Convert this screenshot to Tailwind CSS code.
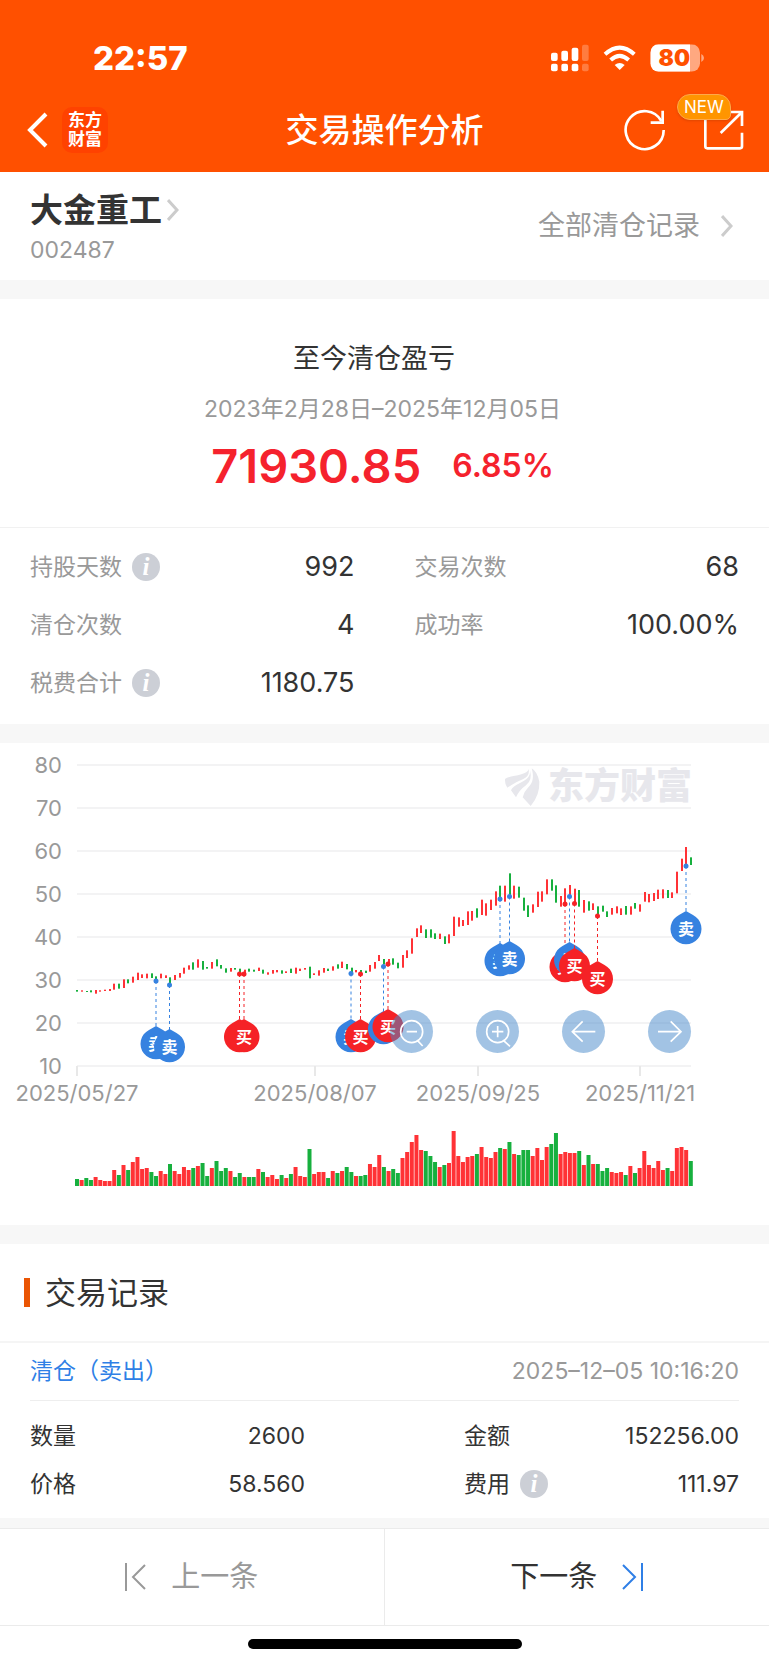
<!DOCTYPE html>
<html lang="zh-CN">
<head>
<meta charset="utf-8">
<meta name="viewport" content="width=device-width, initial-scale=1">
<title>交易操作分析</title>
<script src="https://cdn.jsdelivr.net/npm/@tailwindcss/browser@4"></script>
</head>
<body class="flex min-h-screen flex-col bg-white font-['Inter','Noto_Sans_CJK_SC',sans-serif] text-[#333]">

<header class="bg-[#ff5000] text-white">
  <div class="flex h-[88px] items-end justify-between pr-[65px] pl-[93px]">
    <time class="text-[33px] leading-[60px] font-extrabold">22:57</time>
    <div class="flex h-[60px] items-center gap-[14px]">
      <svg class="h-[28px] w-[38px]" viewBox="153 40 114 84" fill="#fff" aria-label="信号">
        <rect x="153" y="66" width="20" height="25" rx="6"/><rect x="184" y="60" width="20" height="31" rx="6"/><rect x="215" y="51" width="20" height="40" rx="6"/>
        <rect x="246" y="42" width="20" height="49" rx="6" opacity=".25"/>
        <rect x="153" y="99" width="20" height="23" rx="6"/><rect x="184" y="99" width="20" height="23" rx="6"/><rect x="215" y="99" width="20" height="23" rx="6"/>
        <rect x="246" y="99" width="20" height="23" rx="6" opacity=".25"/>
      </svg>
      <svg class="h-[28px] w-[33px]" viewBox="309 40 99 84" fill="none" stroke="#fff" stroke-width="12" aria-label="无线网络">
        <path d="M315 71Q359 31 403 71"/><path d="M332 88Q359 63 386 88"/>
        <path d="M359 118L344 103Q359 91 374 103Z" fill="#fff" stroke="none"/>
      </svg>
      <svg class="h-[28px] w-[54px]" viewBox="450 40 162 84" aria-label="电量">
        <defs><clipPath id="bat"><rect x="451" y="41" width="149" height="82" rx="25"/></clipPath></defs>
        <g clip-path="url(#bat)"><rect x="451" y="41" width="149" height="82" fill="#ffa880"/><rect x="451" y="41" width="119" height="82" fill="#fff"/></g>
        <path d="M604 70q8 4 8 12t-8 12z" fill="#ffa880"/>
        <text x="523" y="106" text-anchor="middle" font-size="68" font-weight="900" fill="#ff5000">80</text>
      </svg>
    </div>
  </div>
  <div class="relative flex h-[84px] items-center pr-[24px] pl-[27px]">
    <button class="mr-[14px] h-[36px] w-[21px]" aria-label="返回">
      <svg class="h-full w-full" viewBox="0 0 21 36" fill="none" stroke="#fff" stroke-width="4"><path d="M19 2L3 18l16 16"/></svg>
    </button>
    <a href="#" class="flex h-[46px] w-[46px] flex-col items-center justify-center rounded-[10px] bg-[#ff4200] text-[17px] leading-[19px] font-bold"><span>东方</span><span>财富</span></a>
    <h1 class="pointer-events-none absolute inset-x-0 text-center text-[33px] leading-[48px] font-medium">交易操作分析</h1>
    <button class="ml-auto h-[42px] w-[42px]" aria-label="刷新">
      <svg class="h-full w-full" viewBox="372 234 126 126" fill="none" stroke="#fff" stroke-width="8"><path d="M491 297A57 57 0 1 1 484 270"/><path d="M488 239v36h-36"/></svg>
    </button>
    <button class="relative ml-[37px] h-[42px] w-[42px]" aria-label="分享">
      <svg class="h-full w-full" viewBox="609 234 126 126" fill="none" stroke="#fff" stroke-width="8"><path d="M640 243H616v103q0 6 6 6h98q6 0 6-6V305"/><path d="M690 243h36v42M723 246L662 306"/></svg>
      <span class="absolute -top-[15px] -left-[26px] h-[26px] rounded-[13px] rounded-br-[5px] border border-[#ffa94a] bg-[#ff9500] px-[6px] text-[17px] leading-[24px] shadow-sm">NEW</span>
    </button>
  </div>
</header>

<main>
  <section class="flex h-[108px] items-start justify-between px-[30px]">
    <div class="pt-[18px]">
      <a href="#" class="flex items-center gap-[5px] text-[33px] leading-[40px] font-bold">大金重工
        <svg class="h-[22px] w-[12px]" viewBox="0 0 12 22" fill="none" stroke="#ccc" stroke-width="3"><path d="M1 1l9 10-9 10"/></svg>
      </a>
      <p class="text-[23px] leading-[40px] text-[#999]">002487</p>
    </div>
    <a href="#" class="flex items-center gap-[21px] pt-[34px] pr-[6px] text-[27px] leading-[40px] text-[#999]">全部清仓记录
      <svg class="h-[22px] w-[12px]" viewBox="0 0 12 22" fill="none" stroke="#ccc" stroke-width="3"><path d="M1 1l9 10-9 10"/></svg>
    </a>
  </section>
  <div class="h-[19px] bg-[#f7f7f7]"></div>

  <section class="flex h-[229px] flex-col items-center border-b border-[#f1f1f1] pt-[40px]">
    <h2 class="pr-[21px] text-[27px] leading-[40px]">至今清仓盈亏</h2>
    <p class="mt-[10px] pr-[4px] text-[23px] leading-[40px] text-[#999]">2023年2月28日–2025年12月05日</p>
    <p class="mt-[7px] flex items-center gap-[31px] pr-[4px] leading-[60px] font-semibold text-[#f5222d]"><span class="text-[47px]">71930.85</span><span class="text-[32px]">6.85%</span></p>
  </section>

  <dl class="grid grid-cols-2 gap-x-[60px] px-[30px] pt-[10px] pb-[12px] text-[27px] leading-[58px]">
    <div class="flex items-center"><dt class="text-[23px] text-[#999]">持股天数</dt><button class="ml-[10px] h-[28px] w-[28px] rounded-full bg-[#cccfd6] font-['Liberation_Serif',serif] text-[25px] leading-[28px] font-bold text-white italic" aria-label="持股天数说明">i</button><dd class="ml-auto">992</dd></div>
    <div class="flex items-center"><dt class="text-[23px] text-[#999]">交易次数</dt><dd class="ml-auto">68</dd></div>
    <div class="flex items-center"><dt class="text-[23px] text-[#999]">清仓次数</dt><dd class="ml-auto">4</dd></div>
    <div class="flex items-center"><dt class="text-[23px] text-[#999]">成功率</dt><dd class="ml-auto">100.00%</dd></div>
    <div class="flex items-center"><dt class="text-[23px] text-[#999]">税费合计</dt><button class="ml-[10px] h-[28px] w-[28px] rounded-full bg-[#cccfd6] font-['Liberation_Serif',serif] text-[25px] leading-[28px] font-bold text-white italic" aria-label="税费合计说明">i</button><dd class="ml-auto">1180.75</dd></div>
  </dl>
  <div class="h-[19px] bg-[#f7f7f7]"></div>

  <section class="relative" aria-label="股价走势">
    <svg id="chart" class="block h-auto w-full" viewBox="0 743 769 482">
      <g id="grid" stroke="#f3f3f4" stroke-width="2"></g>
      <g fill="#e7e7ec">
        <g transform="translate(500 765) scale(.3333)">
          <path d="M86 12C84 22 70 28 45 32Q22 36 15 42Q14 58 22 68Q50 50 70 42Q90 32 86 12Z"/>
          <path d="M90 16C92 35 80 45 60 54Q38 64 33 76L48 97Q58 75 78 61Q98 46 90 16Z"/>
          <path d="M95 10C102 35 100 53 85 67Q72 80 68 97L92 123Q120 90 118 50Q112 20 95 10Z"/>
        </g>
        <text x="548" y="799" font-size="36" font-weight="900">东方财富</text>
      </g>
      <g id="labels" fill="#999" font-size="22"></g>
      <g id="candles"></g>
      <g id="volume"></g>
      <g id="pins"></g>
    </svg>
    <div class="absolute top-[55.4%] right-[10.1%] flex gap-[43px]">
      <button class="h-[43px] w-[43px] rounded-full bg-[#4687c9]/50" aria-label="缩小"><svg class="h-full w-full" viewBox="0 0 129 129" fill="none" stroke="#fff" stroke-width="5"><circle cx="65" cy="65" r="33"/><path d="M50 65h31M82 91l16 17"/></svg></button>
      <button class="h-[43px] w-[43px] rounded-full bg-[#4687c9]/50" aria-label="放大"><svg class="h-full w-full" viewBox="0 0 129 129" fill="none" stroke="#fff" stroke-width="5"><circle cx="65" cy="65" r="33"/><path d="M48 65h34M65 48v34M82 91l20 18"/></svg></button>
      <button class="h-[43px] w-[43px] rounded-full bg-[#4687c9]/50" aria-label="向左"><svg class="h-full w-full" viewBox="0 0 129 129" fill="none" stroke="#fff" stroke-width="5"><path d="M100 65H32M62 34L31 65l31 30"/></svg></button>
      <button class="h-[43px] w-[43px] rounded-full bg-[#4687c9]/50" aria-label="向右"><svg class="h-full w-full" viewBox="0 0 129 129" fill="none" stroke="#fff" stroke-width="5"><path d="M30 65h68M68 34l31 31-31 30"/></svg></button>
    </div>
  </section>
  <div class="h-[19px] bg-[#f7f7f7]"></div>

  <section>
    <div class="flex h-[99px] items-center gap-[15px] border-b-2 border-[#f5f5f5] pl-[24px]">
      <span class="h-[29px] w-[6px] bg-[#ea5504]"></span>
      <h2 class="text-[31px] leading-[44px]">交易记录</h2>
    </div>
    <div class="mx-[30px] flex h-[58px] items-center justify-between border-b border-[#eee]">
      <h3 class="text-[23px] text-[#2f7fe6]">清仓（卖出）</h3>
      <time class="text-[23px] text-[#999]">2025–12–05 10:16:20</time>
    </div>
    <dl class="grid grid-cols-[275fr_275fr] gap-x-[159px] px-[30px] pt-[11px] pb-[10px] text-[23px] leading-[48px]">
      <div class="flex items-center"><dt>数量</dt><dd class="ml-auto">2600</dd></div>
      <div class="flex items-center"><dt>金额</dt><dd class="ml-auto">152256.00</dd></div>
      <div class="flex items-center"><dt>价格</dt><dd class="ml-auto">58.560</dd></div>
      <div class="flex items-center"><dt>费用</dt><button class="ml-[10px] h-[28px] w-[28px] rounded-full bg-[#cccfd6] font-['Liberation_Serif',serif] text-[25px] leading-[28px] font-bold text-white italic" aria-label="费用说明">i</button><dd class="ml-auto">111.97</dd></div>
    </dl>
  </section>
</main>

<nav class="border-t-[10px] border-[#f7f7f7]" aria-label="记录切换">
  <div class="grid h-[98px] grid-cols-2 border-y border-[#ebebeb] text-[29px]">
    <button class="flex items-center justify-center gap-[25px] border-r border-[#ebebeb] text-[#999]">
      <svg class="h-[28px] w-[21px]" viewBox="0 0 21 28" fill="none" stroke="#999" stroke-width="2"><path d="M1 0v28M20 2L8 14l12 12"/></svg>上一条</button>
    <button class="flex items-center justify-center gap-[25px]">下一条<svg class="h-[28px] w-[21px]" viewBox="0 0 21 28" fill="none" stroke="#2f7fe6" stroke-width="2"><path d="M20 0v28M1 2l12 12L1 26"/></svg></button>
  </div>
  <div class="flex h-[39px] items-center justify-center pb-[3px]"><div class="h-[10px] w-[274px] rounded-full bg-black"></div></div>
</nav>

<script>
const NS = 'http://www.w3.org/2000/svg';
function add(parent, tag, attrs, text) {
  const el = document.createElementNS(NS, tag);
  for (const k in attrs) el.setAttribute(k, attrs[k]);
  if (text) el.textContent = text;
  document.getElementById(parent).appendChild(el);
}
const RED = '#ff3236', GREEN = '#17b03e';

// Price axis
for (let p = 80, y = 765; p >= 10; p -= 10, y += 43) {
  add('grid', 'path', { d: `M77 ${y}H691` });
  add('labels', 'text', { x: 62, y: y + 8, 'text-anchor': 'end' }, String(p));
}
// Date axis
[[77, '2025/05/27'], [315, '2025/08/07'], [478, '2025/09/25'], [640, '2025/11/21']].forEach(([x, d]) => {
  add('grid', 'path', { d: `M${x} 1066v10`, stroke: '#e8e8e8' });
  add('labels', 'text', { x, y: 1101, 'text-anchor': 'middle' }, d);
});

// One entry per trading day: direction, high, low, volume
const days = `g720,725,7 r721,725,6 g723,726,8 g721,727,6 r720,731,9 r721,725,6 r719,723,5 r717,723,5 r701,719,16 g701,716,11
r688,714,21 g688,700,16 r680,698,24 r668,690,29 r673,684,17 r671,685,18 g670,684,14 g679,690,10 r671,685,15 r676,684,12
g682,704,22 r675,690,15 r669,683,12 r653,671,19 r646,659,16 g637,659,18 r628,653,20 g633,659,23 g651,656,10 r636,656,18
g628,649,25 g645,656,15 g655,668,18 r654,665,15 g654,659,9 g656,671,13 r659,671,9 g656,665,9 g659,665,9 r653,663,17
g659,671,14 r667,674,9 r660,671,11 r660,667,7 g661,671,11 r664,669,8 g656,669,12 r653,671,19 r656,663,10 r654,659,9
g650,685,37 r670,675,12 r661,677,14 r654,668,14 g656,663,8 r649,662,15 g643,656,13 r635,654,15 g642,658,19 g653,667,14
r660,667,10 g660,671,10 g662,669,11 r645,665,22 r636,656,19 r615,633,31 g627,643,19 r627,640,15 g625,644,17 g638,655,13
r615,653,28 r601,624,34 r565,611,44 r535,561,51 r526,549,36 g538,564,35 g538,563,30 g550,567,24 r551,567,19 g559,582,21
r553,580,23 r500,558,55 r502,530,30 r510,528,24 r484,525,29 r483,512,30 g475,503,32 r449,495,39 r460,497,29 r449,480,28
r424,467,34 g407,443,38 r407,455,37 g370,440,44 r407,446,32 g410,443,31 g443,482,36 g466,501,36 r463,488,30 r425,471,38
r424,455,26 r388,433,39 g388,422,42 g406,458,53 r438,470,32 r415,462,34 r405,440,33 r416,458,33 g420,470,35 r450,488,21
g454,482,31 r460,480,22 g469,497,22 g467,485,15 g484,501,18 r474,494,14 r469,490,13 r475,495,14 g468,494,11 r469,494,20
g459,476,13 r463,485,18 r426,455,35 r432,457,21 r429,453,18 r419,447,25 r418,445,16 g420,444,18 r427,444,15 r365,430,38
r326,363,39 r291,345,36 g322,345,25`.split(/\s+/);
days.forEach((d, i) => {
  const [hi, lo, vol] = d.slice(1).split(',').map(Number);
  const fill = d[0] === 'r' ? RED : GREEN, x = 77 + 4.65 * i;
  add('candles', 'rect', { x: Math.round(x - .8), y: 750 + hi / 3, width: 2, height: (lo - hi) / 3, fill });
  add('volume', 'rect', { x: x - 2, y: 1186 - vol, width: 4, height: vol, fill });
});

// Trade markers: side, x, price point y, pin centre y
[['s', 156, 981, 1044], ['s', 169.5, 985, 1047], ['b', 239.5, 974, 1037], ['b', 244, 974, 1037], ['s', 351, 973.5, 1037],
 ['b', 360.5, 974, 1037], ['s', 383.5, 966.5, 1029], ['b', 388, 964, 1027], ['s', 500, 899, 961], ['s', 509.5, 896.5, 959],
 ['b', 565, 904, 967], ['s', 569.5, 896.5, 960], ['b', 574.5, 903.5, 966], ['b', 597.5, 916, 979], ['s', 686, 866, 929]
].forEach(([side, x, y, cy]) => {
  const c = side === 's' ? '#3682e0' : '#f52226';
  add('pins', 'path', { d: `M${x} ${y}V${cy - 17}`, stroke: c, 'stroke-width': 1, 'stroke-dasharray': '3 3' });
  add('pins', 'circle', { cx: x, cy: y, r: 2.5, fill: c });
  add('pins', 'path', { d: `M${x} ${cy - 18}l7 4a15.5 15.5 0 1 1 -14 0z`, fill: c });
  add('pins', 'text', { x, y: cy + 6, 'text-anchor': 'middle', 'font-size': 16, 'font-weight': 700, fill: '#fff' }, side === 's' ? '卖' : '买');
});
</script>
</body>
</html>
